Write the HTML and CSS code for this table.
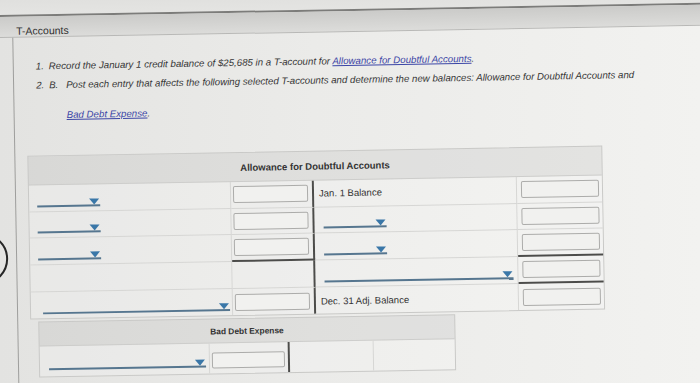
FILE: index.html
```html
<!DOCTYPE html>
<html lang="en">
<head>
  <meta charset="UTF-8">
  <title>T-Accounts</title>
  <link rel="stylesheet" href="styles.css">
</head>
<body>
  <div class="page">
    <span class="ring"></span>
    <div class="top-strip"></div>
    <div class="tab-header">T-Accounts</div>

    <div class="panel">
      <div class="steps">
        <p class="step"><span class="num">1.</span>Record the January 1 credit balance of $25,685 in a T-account for <a href="#" class="acct-link">Allowance for Doubtful Accounts</a>.</p>
        <p class="step"><span class="num">2.</span><span class="sub">B.</span>Post each entry that affects the following selected T-accounts and determine the new balances: Allowance for Doubtful Accounts and
          <span class="step-more"><a href="#" class="acct-link">Bad Debt Expense</a>.</span></p>
      </div>

      <!-- Allowance for Doubtful Accounts -->
      <div class="t-account allowance">
        <div class="ta-title">Allowance for Doubtful Accounts</div>

        <div class="cell"><span class="pick"></span></div>
        <div class="cell debit-amt"><input class="amount" type="text"></div>
        <div class="cell label">Jan. 1 Balance</div>
        <div class="cell credit-amt"><input class="amount" type="text"></div>

        <div class="cell"><span class="pick"></span></div>
        <div class="cell debit-amt"><input class="amount" type="text"></div>
        <div class="cell"><span class="pick pick-right"></span></div>
        <div class="cell credit-amt"><input class="amount" type="text"></div>

        <div class="cell"><span class="pick"></span></div>
        <div class="cell debit-amt rule-below"><input class="amount" type="text"></div>
        <div class="cell"><span class="pick pick-right"></span></div>
        <div class="cell credit-amt rule-below"><input class="amount" type="text"></div>

        <div class="cell"></div>
        <div class="cell debit-amt"></div>
        <div class="cell"><span class="pick pick-long pick-right"></span></div>
        <div class="cell credit-amt rule-below"><input class="amount" type="text"></div>

        <div class="cell last"><span class="pick pick-long"></span></div>
        <div class="cell debit-amt last"><input class="amount" type="text"></div>
        <div class="cell label last">Dec. 31 Adj. Balance</div>
        <div class="cell credit-amt last"><input class="amount" type="text"></div>
      </div>

      <!-- Bad Debt Expense -->
      <div class="t-account expense">
        <div class="ta-title">Bad Debt Expense</div>

        <div class="cell last"><span class="pick pick-expense"></span></div>
        <div class="cell debit-amt last"><input class="amount amount-sm" type="text"></div>
        <div class="cell last"></div>
        <div class="cell credit-amt last"></div>
      </div>
    </div>
  </div>
</body>
</html>
```

FILE: styles.css
```css
* {
  box-sizing: border-box;
}

html, body {
  margin: 0;
  height: 100%;
  overflow: hidden;
}

body {
  background: linear-gradient(90deg, #e3e3e1 0%, #ebebe9 45%, #f2f2f0 100%);
  color: #333;
  font-family: "Liberation Sans", Arial, sans-serif;
}

/* whole sheet sits a little tilted on the screen */
.page {
  position: relative;
  width: 740px;
  margin: -20px;
  padding: 0 20px;
  transform: rotate(-1deg);
  transform-origin: 370px 211px;
}

.top-strip {
  height: 31px;
  margin: 0 -20px;
  background: linear-gradient(#dcdcda, #e4e4e2);
  border-bottom: 2px solid #7c7c7a;
}

.tab-header {
  height: 21px;
  margin: 0 -20px;
  padding: 8px 0 0 39px;
  font-size: 10.5px;
  line-height: 12px;
  color: #2e2e2e;
  background: linear-gradient(#cbcbc9, #dcdcda);
  border-bottom: 1px solid #b8b8b6;
}

.ring {
  position: absolute;
  left: -24px;
  top: 247px;
  width: 51px;
  height: 51px;
  border: 2px solid #262626;
  border-radius: 50%;
}

.panel {
  margin-left: 15px;
  padding: 20px 0 12px;
  border-left: 1px solid #9e9e9c;
}

/* instructions */
.steps {
  padding-left: 22px;
}

.step {
  margin: 0;
  font-size: 9.7px;
  font-style: italic;
  line-height: 18px;
  white-space: nowrap;
  color: #363636;
}

.step + .step {
  margin-top: 1px;
}

.num {
  display: inline-block;
  width: 13px;
}

.sub {
  display: inline-block;
  width: 17px;
}

.step-more {
  display: block;
  margin-top: 12px;
  padding-left: 30px;
}

.acct-link {
  color: #3c46a6;
  text-decoration: underline;
}

/* T-account grids */
.t-account {
  display: grid;
  width: fit-content;
  border: 1px solid #c9c9c7;
}

.allowance {
  margin: 31px 0 0 12px;
  grid-template-columns: 202px 83px 203px 85px;
  grid-template-rows: 29px repeat(5, 26.7px);
}

.expense {
  margin: 2px 0 0 20px;
  grid-template-columns: 170px 80px 84px 81px;
  grid-template-rows: 24px 30px;
}

.ta-title {
  grid-column: 1 / -1;
  display: flex;
  align-items: center;
  justify-content: center;
  font-size: 9.5px;
  font-weight: bold;
  color: #333;
  background: rgba(0, 0, 0, 0.05);
  border-bottom: 1px solid #cdcdcb;
}

.expense .ta-title {
  font-size: 8.4px;
  padding-top: 1px;
}

.cell {
  display: flex;
  align-items: center;
  background: rgba(255, 255, 255, 0.18);
  border-right: 1px solid #d6d6d4;
  border-bottom: 1px solid #d6d6d4;
}

.cell.last {
  border-bottom: none;
}

.cell.credit-amt {
  border-right: none;
}

.cell.debit-amt {
  border-right: 2px solid #4c4c4a;
}

.cell.rule-below {
  border-bottom: 2px solid #4c4c4a;
}

.cell.label {
  padding-left: 5px;
  font-size: 9.5px;
  color: #333;
}

/* dropdown stand-ins: underline with a caret at the end */
.pick {
  align-self: flex-end;
  display: flex;
  justify-content: flex-end;
  width: 63px;
  height: 9px;
  margin: 0 0 4px 8px;
  padding-right: 1px;
  border-bottom: 2px solid #56768f;
}

.pick::after {
  content: "";
  margin-top: 1px;
  border-left: 5.5px solid transparent;
  border-right: 5.5px solid transparent;
  border-top: 6px solid #3a77a8;
}

.pick-right {
  margin-left: 9px;
}

.pick-long {
  width: 187px;
  margin-left: 12px;
}

.pick-long.pick-right {
  margin-left: 9px;
  width: 189px;
}

.pick-expense {
  width: 157px;
  margin-left: 9px;
  margin-bottom: 6px;
}

.amount {
  width: 75px;
  height: 17px;
  margin: 0 0 0 2px;
  padding: 0;
  border: 1px solid #acacaa;
  border-radius: 2px;
  background: #f1f1ef;
  font: 9px "Liberation Sans", Arial, sans-serif;
}

.credit-amt .amount {
  width: 78px;
  margin-left: 4px;
}

.amount-sm {
  width: 73px;
  height: 16px;
  margin-top: 3px;
}
```
